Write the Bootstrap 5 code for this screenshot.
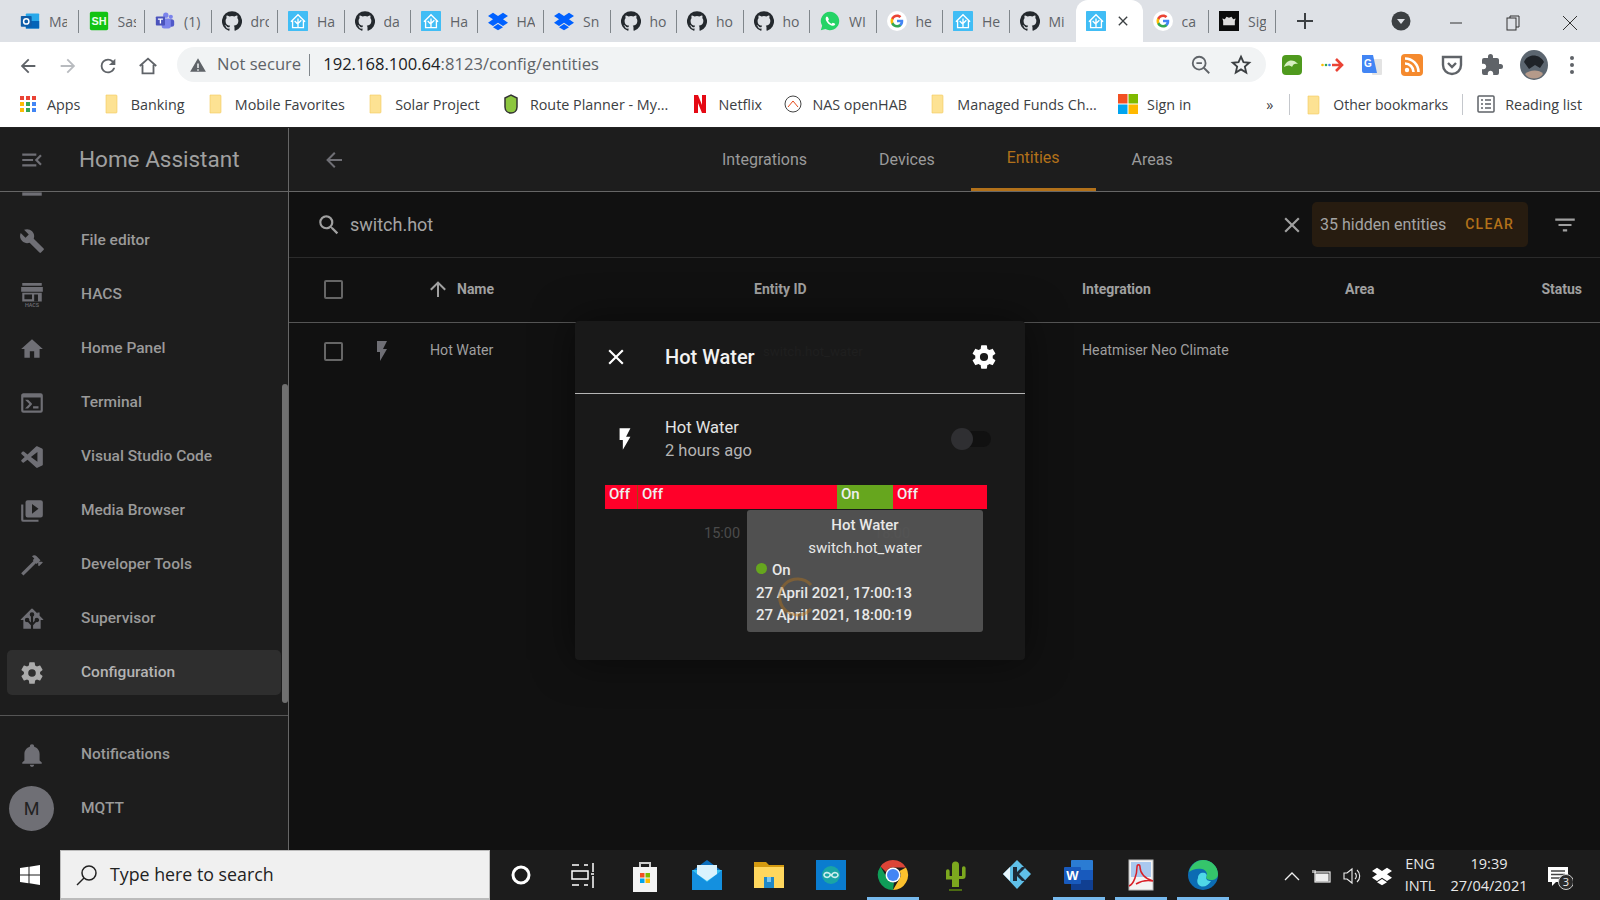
<!DOCTYPE html>
<html lang="en">
<head>
  <meta charset="UTF-8" />
  <meta name="viewport" content="width=device-width, initial-scale=1" />
  <title>Entities - Home Assistant</title>
  <link href="https://cdn.jsdelivr.net/npm/bootstrap@5.3.0/dist/css/bootstrap.min.css" rel="stylesheet" />
  <style>
    html, body { height: 900px; overflow: hidden; }
    body { font-family: "Open Sans", "Liberation Sans", sans-serif; background: #111; width: 1600px; }
    .ha { font-family: Roboto, "Liberation Sans", sans-serif; }

    /* browser chrome */
    .tabstrip { height: 42px; background: #dee1e6; padding-left: 12px; }
    .btab { width: 66.5px; height: 42px; padding-left: 10px; position: relative; color: #5f6368; font-size: 14px; }
    .btab:first-child { padding-left: 8px; }
    .btab::after { content: ""; position: absolute; right: 0; top: 10px; height: 23px; width: 1px; background: #80868b; }
    .btab svg { width: 20px; height: 20px; flex: none; }
    .btab .ttl { margin-left: 9px; width: 18px; overflow: hidden; white-space: nowrap; }
    .btab.on { background: #fff; border-radius: 12px 12px 0 0; }
    .btab.on::after, .btab.nosep::after { display: none; }
    .btab.on .tabx { width: 16px; height: 16px; margin-right: 11.5px; }
    .newtab { margin-left: 20px; }
    .chromegap { margin-left: 77px; }
    .winctl { width: 57px; }
    .wingap { margin-left: 17px; }
    .toolbar { height: 43px; background: #fff; padding-top: 2px; }
    .tb-btn { width: 40px; }
    .omni { width: 1089px; height: 35px; background: #f1f3f4; border-radius: 18px; margin-left: 9px; padding-left: 12px; font-size: 16.6px; color: #5f6368; }
    .omni .warnico { margin-right: 10px; }
    .omni .urlsep { width: 1px; height: 22px; background: #80868b; margin: 0 13px 0 8px; }
    .omni .urlhost { color: #202124; }
    .omni-end { gap: 18px; padding-right: 14px; }
    .ext-icons { gap: 16px; margin-left: 14px; }
    .bookmarks { height: 43px; background: #fff; border-bottom: 1px solid #222; font-size: 14.35px; color: #3c4043; padding: 0 0 3px 18px; white-space: nowrap; }
    .bookmarks svg { width: 20px; height: 20px; flex: none; }
    .bmk { gap: 9px; margin-right: 21.3px; }
    .bmsep { width: 1px; height: 21px; background: #c4c7cc; }
    .bmk-other { margin: 0 14px 0 14px; font-size: 14px; }
    .bmk-read { margin: 0 18px 0 13px; }

    /* sidebar */
    .app { height: 722px; position: relative; }
    .sidebar { width: 289px; background: #1d1d1d; border-right: 1px solid #666; position: relative; flex: none; }
    .side-head { height: 64px; border-bottom: 1px solid #666; flex: none; color: #a0a0a0; font-size: 22.5px; padding-left: 19px; }
    .side-head svg { margin-right: 34px; }
    .side-scroll { height: 524px; overflow: hidden; border-bottom: 1px solid #555; padding-bottom: 20px; flex: none; }
    .side-item { height: 45px; margin: 0 7px 9px; padding-left: 12px; color: #9a9a9a; font-size: 15.5px; font-weight: 500; border-radius: 5px; flex: none; width: 274px; }
    .side-item:last-child { margin-bottom: 0; }
    .side-item svg { width: 26px; height: 26px; fill: #6f6f75; margin-right: 36px; flex: none; }
    .side-item.cur { background: #2e2e2e; color: #b4b4b4; }
    .side-item.cur svg { fill: #ababab; }
    .side-foot { padding-top: 16px; }
    .avatar { width: 45px; height: 45px; border-radius: 50%; background: #6f6f75; color: #222; font-size: 18px; font-weight: 400; margin: 0 27px 0 -10px; }
    .scrollthumb { position: absolute; right: 0; top: 256px; width: 6px; height: 319px; background: #707070; border-radius: 3px; }

    /* main panel */
    .tabbar { height: 64px; background: #1d1d1d; border-bottom: 1px solid #666; color: #9a9a9a; font-size: 16px; }
    .tabbar .backbtn { width: 24px; margin-left: 33px; margin-right: 340px; }
    .hatab { height: 63px; padding: 0 36px; }
    .hatab.on { color: #b2711a; border-bottom: 3px solid #b2711a; }
    .searchrow { height: 66px; border-bottom: 1px solid #2b2b2b; color: #a4a4a4; font-size: 18px; padding-left: 27px; }
    .filterico { margin: 0 22px 0 24px; }
    .hiddenbox { width: 216px; height: 45px; background: #271c10; border-radius: 5px; padding: 0 14px 0 8px; font-size: 16px; margin-left: 7px; }
    .clearbtn { color: #b2711a; font-size: 14px; font-weight: 500; letter-spacing: 1.2px; }
    .cols { display: grid; grid-template-columns: 81px 60px 324px 328px 263px 1fr auto; }
    .headrow { height: 65px; border-bottom: 1px solid #555; color: #a0a0a0; font-size: 14px; font-weight: 700; padding-bottom: 2px; }
    .headrow .statuscol { padding-right: 18px; }
    .arrowup { margin: 0 7px 0 -4px; }
    .entrow { height: 58px; color: #9f9f9f; font-size: 14.2px; padding-bottom: 2px; }
    .cbox { width: 19px; height: 19px; border: 2px solid #666; border-radius: 2px; margin-left: 35px; }

    /* dialog */
    .moreinfo { position: absolute; left: 575px; top: 193px; width: 450px; height: 339px; background: #191919; border-radius: 4px; box-shadow: 0 0 40px rgba(0,0,0,.5); color: #e4e4e4; }
    .mi-head { height: 73px; border-bottom: 1px solid #b5b5b5; padding: 0 27px 0 28px; position: relative; }
    .mi-title { font-size: 20px; font-weight: 500; color: #f2f2f2; margin-left: 36px; }
    .mi-ghost { position: absolute; left: 188px; top: 21px; font-size: 13.2px; color: #1f1f1f; }
    .mi-state { height: 82px; padding: 0 34px 0 37px; margin-top: 4px; font-size: 16.5px; line-height: 23px; }
    .mi-name { margin-left: 27px; }
    .mi-sub { color: #b4b4b4; }
    .mi-switch { width: 40px; height: 16px; background: #111; border-radius: 8px; position: relative; }
    .mi-knob { position: absolute; left: 0; top: -3px; width: 22px; height: 22px; border-radius: 50%; background: #2f2f32; }
    .timeline { margin: 5px 38px 0 30px; height: 24px; color: #eee; font-size: 15px; }
    .seg { padding-left: 4px; height: 24px; line-height: 19px; font-weight: 500; }
    .seg-off { background: #ff0029; }
    .seg-on { background: #66a61e; }
    .seg + .seg-off { border-left: 1px solid #a04a10; }
    .seg-on + .seg-off { border-left: 0; }
    .axis { color: #4b4b4b; font-size: 14.5px; position: absolute; top: 202px; }
    .axis-a { left: 129px; }
    .axis-b { left: 299px; }
    .spinner { position: absolute; left: 200px; top: 254px; width: 44px; height: 44px; }
    .chart-tip { position: absolute; left: 172px; top: 189px; width: 236px; height: 122px; background: rgba(84,84,84,.94); border-radius: 3px; padding: 4px 9px; font-size: 15px; line-height: 22.6px; color: #e8e8e8; font-weight: 500; }
    .chart-tip .tip-id { font-weight: 400; }
    .tipdot { width: 11px; height: 11px; border-radius: 50%; background: #66a61e; margin-right: 5px; margin-top: -3px; }

    /* taskbar */
    .taskbar { height: 50px; background: #1c1c1c; color: #e8e8e8; position: relative; }
    .startbtn { width: 60px; }
    .tasksearch { width: 430px; background: #f0f0f0; border: 1px solid #bbb; border-bottom-width: 2px; color: #222; font-size: 17.8px; padding-left: 14px; }
    .tasksearch svg { margin-right: 11px; }
    .taskapp { width: 62px; height: 50px; position: relative; }
    .taskapp svg { width: 34px; height: 34px; }
    .taskapp.run::after { content: ""; position: absolute; left: 5px; right: 5px; bottom: 0; height: 3px; background: #76b9ed; }
    .tray { font-size: 14.5px; }
    .trayico { width: 30px; }
    .trayclock { line-height: 22px; text-align: center; }
    .traylang { width: 36px; margin-left: 5px; }
    .trayclockbox { width: 98px; margin-left: 2px; }
    .trayspace { width: 62px; }
    .notif { position: absolute; left: 1547px; top: 14px; }
  </style>
</head>
<body class="d-flex flex-column">

<svg width="0" height="0" class="position-absolute">
  <symbol id="i-gh" viewBox="0 0 24 24"><path fill="#24292e" d="M12 .3a12 12 0 0 0-3.8 23.4c.6.1.8-.3.8-.6v-2c-3.3.7-4-1.6-4-1.6-.6-1.4-1.4-1.8-1.4-1.8-1-.7.1-.7.1-.7 1.2 0 1.9 1.2 1.9 1.2 1 1.8 2.8 1.3 3.5 1 0-.8.4-1.3.7-1.6-2.7-.3-5.5-1.3-5.5-6 0-1.2.5-2.3 1.3-3.1-.2-.4-.6-1.6 0-3.2 0 0 1-.3 3.4 1.2a11.5 11.5 0 0 1 6 0c2.3-1.5 3.3-1.2 3.3-1.2.6 1.6.2 2.8 0 3.2.9.8 1.3 1.9 1.3 3.2 0 4.6-2.8 5.6-5.5 5.9.5.4.9 1 .9 2.2v3.3c0 .3.1.7.8.6A12 12 0 0 0 12 .3"/></symbol>
  <symbol id="i-ha" viewBox="0 0 24 24"><rect width="24" height="24" rx="1" fill="#41bdf5"/><path fill="none" stroke="#fff" stroke-width="1.6" d="M3.500 13 12 4.500 20.500 13M5.500 11.500V20h13v-8.500M12 20V9M12 16l-4-4M12 15l4-4"/></symbol>
  <symbol id="i-db" viewBox="0 0 24 24"><path fill="#0061ff" d="M6 2 0 6l6 4-6 4 6 4 6-4 6 4 6-4-6-4 6-4-6-4-6 4zm6 4-6 4 6 4 6-4zM6 19.500 12 23l6-3.500-6-4z"/></symbol>
  <symbol id="i-g" viewBox="0 0 24 24"><circle cx="12" cy="12" r="12" fill="#fff"/><g transform="translate(3.500 3.500) scale(.71)"><path fill="#4285F4" d="M22.56 12.25c0-.78-.07-1.53-.2-2.25H12v4.26h5.92c-.26 1.37-1.04 2.53-2.21 3.31v2.77h3.57c2.08-1.92 3.28-4.74 3.28-8.09z"/><path fill="#34A853" d="M12 23c2.97 0 5.46-.98 7.28-2.66l-3.57-2.77c-.98.66-2.23 1.06-3.71 1.06-2.86 0-5.29-1.93-6.16-4.53H2.18v2.84C3.99 20.53 7.7 23 12 23z"/><path fill="#FBBC05" d="M5.84 14.09c-.22-.66-.35-1.36-.35-2.09s.13-1.43.35-2.09V7.07H2.18C1.43 8.55 1 10.22 1 12s.43 3.45 1.18 4.93l3.66-2.84z"/><path fill="#EA4335" d="M12 5.38c1.62 0 3.06.56 4.21 1.64l3.15-3.15C17.45 2.09 14.97 1 12 1 7.7 1 3.99 3.47 2.18 7.07l3.66 2.84c.87-2.6 3.3-4.53 6.16-4.53z"/></g></symbol>
  <symbol id="i-ol" viewBox="0 0 24 24"><rect x="7" y="3" width="16" height="18" rx="1" fill="#28a8ea"/><rect x="7" y="12" width="16" height="9" fill="#0364b8"/><rect x="1" y="6" width="13" height="13" rx="1" fill="#0f5da8"/><circle cx="7.500" cy="12.500" r="3.200" fill="none" stroke="#fff" stroke-width="1.800"/></symbol>
  <symbol id="i-sh" viewBox="0 0 24 24"><rect x="1" y="1" width="22" height="22" rx="2" fill="#12c312"/><text x="12" y="17" font-size="13" font-weight="700" text-anchor="middle" fill="#eaffea" font-family="Liberation Sans">SH</text></symbol>
  <symbol id="i-teams" viewBox="0 0 24 24"><circle cx="19" cy="7" r="2.500" fill="#7b83eb"/><circle cx="13" cy="5" r="3.200" fill="#7b83eb"/><rect x="16" y="10" width="7" height="9" rx="3" fill="#5059c9"/><rect x="8" y="9" width="11" height="12" rx="3" fill="#7b83eb"/><rect x="1" y="6.500" width="11" height="11" rx="1" fill="#4b53bc"/><path fill="#fff" d="M3.500 9h6v1.500H7.300V15H5.700v-4.500H3.500z"/></symbol>
  <symbol id="i-wa" viewBox="0 0 24 24"><path fill="#25d366" d="M12 1a11 11 0 0 0-9.400 16.700L1 23l5.500-1.500A11 11 0 1 0 12 1z"/><path fill="#fff" d="M8.300 6.500c-.4 0-1.500.9-1.500 2.700 0 2.700 3.700 7.800 8.500 8.500 1.800.2 2.900-1.100 3-2.100 0-.4-2.500-1.700-3-1.600-.5.200-1 1.400-1.500 1.300-1.400-.3-3.700-2.400-4.100-3.600 0-.5 1-.9 1-1.500 0-.5-1-3-1.400-3.100z"/></symbol>
  <symbol id="i-crown" viewBox="0 0 24 24"><rect width="24" height="24" fill="#0b0c0c"/><path fill="#ddd" d="M5 17v-5l-1-3 3 1 2-3 3 1 3-1 2 3 3-1-1 3v5z"/></symbol>
  <symbol id="i-folder" viewBox="0 0 20 20"><path fill="#fde293" stroke="#f4c95d" stroke-width=".6" d="M3.500 1h10a1 1 0 0 1 1 1v16a1 1 0 0 1-1 1h-10z" transform="translate(.5 0)"/></symbol>
  <symbol id="m-close" viewBox="0 0 24 24"><path d="M19,6.410L17.590,5L12,10.590L6.410,5L5,6.410L10.590,12L5,17.590L6.410,19L12,13.410L17.590,19L19,17.590L13.410,12L19,6.410Z"/></symbol>
  <symbol id="m-cog" viewBox="0 0 24 24"><path d="M12,15.500A3.500,3.500 0 0,1 8.500,12A3.500,3.500 0 0,1 12,8.500A3.500,3.500 0 0,1 15.500,12A3.500,3.500 0 0,1 12,15.500M19.430,12.970C19.470,12.650 19.500,12.330 19.500,12C19.500,11.670 19.470,11.340 19.430,11L21.540,9.370C21.730,9.220 21.780,8.950 21.660,8.730L19.660,5.270C19.540,5.050 19.270,4.960 19.050,5.050L16.560,6.050C16.040,5.660 15.500,5.320 14.870,5.070L14.500,2.420C14.460,2.180 14.250,2 14,2H10C9.750,2 9.540,2.180 9.500,2.420L9.130,5.070C8.500,5.320 7.960,5.660 7.440,6.050L4.950,5.050C4.730,4.960 4.460,5.050 4.340,5.270L2.340,8.730C2.210,8.950 2.270,9.220 2.460,9.370L4.570,11C4.530,11.340 4.500,11.670 4.500,12C4.500,12.330 4.530,12.650 4.570,12.970L2.460,14.630C2.270,14.780 2.210,15.050 2.340,15.270L4.340,18.730C4.460,18.950 4.730,19.030 4.950,18.950L7.440,17.940C7.960,18.340 8.500,18.680 9.130,18.930L9.500,21.580C9.540,21.820 9.750,22 10,22H14C14.250,22 14.460,21.820 14.500,21.580L14.870,18.930C15.500,18.670 16.040,18.340 16.560,17.940L19.050,18.950C19.270,19.030 19.540,18.950 19.660,18.730L21.660,15.270C21.780,15.050 21.730,14.780 21.540,14.630L19.430,12.970Z"/></symbol>
  <symbol id="m-flash" viewBox="0 0 24 24"><path d="M7,2V13H10V22L17,10H13L17,2H7Z"/></symbol>
</svg>

<!-- tab strip -->
<div class="tabstrip d-flex align-items-center" id="tabstrip"></div>

<!-- address bar -->
<div class="toolbar d-flex align-items-center">
  <div class="tb-btn text-center ms-2"><svg width="22" height="22" viewBox="0 0 24 24" fill="#5f6368"><path d="M20,11V13H8L13.500,18.500L12.080,19.920L4.160,12L12.080,4.080L13.500,5.500L8,11H20Z"/></svg></div>
  <div class="tb-btn text-center"><svg width="22" height="22" viewBox="0 0 24 24" fill="#b8bbbf"><path d="M4,11V13H16L10.500,18.500L11.920,19.920L19.840,12L11.920,4.080L10.500,5.500L16,11H4Z"/></svg></div>
  <div class="tb-btn text-center"><svg width="22" height="22" viewBox="0 0 24 24" fill="#5f6368"><path d="M17.650,6.350C16.200,4.900 14.210,4 12,4A8,8 0 0,0 4,12A8,8 0 0,0 12,20C15.730,20 18.840,17.450 19.730,14H17.650C16.830,16.330 14.610,18 12,18A6,6 0 0,1 6,12A6,6 0 0,1 12,6C13.660,6 15.140,6.690 16.220,7.780L13,11H20V4L17.650,6.350Z"/></svg></div>
  <div class="tb-btn text-center"><svg width="22" height="22" viewBox="0 0 24 24" fill="none" stroke="#5f6368" stroke-width="2"><path d="M3 12 12 4l9 8M6 10.500V20h12v-9.500"/></svg></div>
  <div class="omni d-flex align-items-center">
    <svg width="18" height="18" viewBox="0 0 24 24" fill="#5f6368" class="warnico"><path d="M12 3 1.500 21h21zM11 10h2v6h-2zm0 7.500h2v2h-2z" fill-rule="evenodd"/></svg>
    <span>Not secure</span><span class="urlsep"></span>
    <span><span class="urlhost">192.168.100.64</span>:8123/config/entities</span>
    <span class="omni-end ms-auto d-flex align-items-center">
      <svg width="22" height="22" viewBox="0 0 24 24" fill="none" stroke="#5f6368" stroke-width="2"><circle cx="10" cy="10" r="7"/><path d="M15 15l6 6M7 10h6"/></svg>
      <svg width="22" height="22" viewBox="0 0 24 24" fill="none" stroke="#3c4043" stroke-width="2"><path d="m12 3 2.700 6 6.300.6-4.800 4.200 1.500 6.400L12 16.800l-5.700 3.400 1.500-6.400L3 9.600 9.300 9z"/></svg>
    </span>
  </div>
  <div class="ext-icons d-flex align-items-center">
    <svg width="24" height="24" viewBox="0 0 24 24"><rect x="2" y="2" width="20" height="20" rx="4" fill="#4f9a1e"/><path fill="#d7efc2" d="M4 14c2-7 9-9 14-3-3-1-5 0-6 3-2-2-5-2-8 0z"/></svg>
    <svg width="24" height="24" viewBox="0 0 24 24"><circle cx="2.500" cy="12" r="1.300" fill="#fbbc05"/><circle cx="6" cy="12" r="1.300" fill="#34a853"/><circle cx="9.500" cy="12" r="1.300" fill="#4285f4"/><path fill="none" stroke="#ea4335" stroke-width="2.600" d="M12 12h9M16 6l6 6-6 6"/></svg>
    <svg width="24" height="24" viewBox="0 0 24 24"><rect x="12" y="6" width="10" height="16" rx="1" fill="#e3e3e3"/><path fill="#4285f4" d="M2 2h11l4 18H4a2 2 0 0 1-2-2z"/><text x="8" y="14" font-size="10" font-weight="700" text-anchor="middle" fill="#fff" font-family="Liberation Sans">G</text></svg>
    <svg width="24" height="24" viewBox="0 0 24 24"><rect x="1" y="1" width="22" height="22" rx="4" fill="#f58a2e"/><circle cx="7" cy="17" r="2.200" fill="#fff"/><path fill="none" stroke="#fff" stroke-width="2.600" d="M5 10.500a8.500 8.500 0 0 1 8.500 8.500M5 5.500A13.500 13.500 0 0 1 18.500 19"/></svg>
    <svg width="24" height="24" viewBox="0 0 24 24"><path fill="none" stroke="#5f6368" stroke-width="2.400" d="M3 4h18v8a9 9 0 0 1-18 0zM8 10l4 4 4-4"/></svg>
    <svg width="24" height="24" viewBox="0 0 24 24" fill="#5f6368"><path d="M20.500,11H19V7C19,5.890 18.100,5 17,5H13V3.500A2.500,2.500 0 0,0 10.500,1A2.500,2.500 0 0,0 8,3.500V5H4A2,2 0 0,0 2,7V10.800H3.500C5,10.800 6.200,12 6.200,13.500C6.200,15 5,16.200 3.500,16.200H2V20A2,2 0 0,0 4,22H7.800V20.500C7.800,19 9,17.800 10.500,17.800C12,17.800 13.200,19 13.200,20.500V22H17A2,2 0 0,0 19,20V16H20.500A2.500,2.500 0 0,0 23,13.500A2.500,2.500 0 0,0 20.500,11Z"/></svg>
    <svg width="28" height="30" viewBox="0 0 28 30"><ellipse cx="14" cy="15" rx="14" ry="15" fill="#5c6670"/><path fill="#1f2328" d="M4 12c3-8 15-9 20 0l-4 6-5-3-6 4z"/><path fill="#b59a8a" d="M5 24c4-4 14-5 18 0-4 6-14 6-18 0z"/></svg>
    <svg width="16" height="22" viewBox="0 0 16 22" fill="#5f6368"><circle cx="8" cy="4" r="2"/><circle cx="8" cy="11" r="2"/><circle cx="8" cy="18" r="2"/></svg>
  </div>
</div>

<!-- bookmarks bar -->
<div class="bookmarks d-flex align-items-center" id="bookmarks"></div>

<!-- home assistant -->
<div class="app ha d-flex">
  <aside class="sidebar d-flex flex-column">
    <div class="side-head d-flex align-items-center">
      <svg width="26" height="26" viewBox="0 0 24 24" fill="#6f6f75"><path d="M21,15.610L19.590,17L14.580,12L19.590,7L21,8.390L17.440,12L21,15.610M3,6H16V8H3V6M3,13V11H13V13H3M3,18V16H16V18H3Z"/></svg>
      <span>Home Assistant</span>
    </div>
    <div class="side-scroll d-flex flex-column justify-content-end" id="sideList"></div>
    <div class="side-foot">
      <div class="side-item d-flex align-items-center"><svg viewBox="0 0 24 24"><path d="M21,19V20H3V19L5,17V11C5,7.900 7.030,5.170 10,4.290C10,4.190 10,4.100 10,4A2,2 0 0,1 12,2A2,2 0 0,1 14,4C14,4.100 14,4.190 14,4.290C16.970,5.170 19,7.900 19,11V17L21,19M14,21A2,2 0 0,1 12,23A2,2 0 0,1 10,21"/></svg>Notifications</div>
      <div class="side-item d-flex align-items-center"><span class="avatar d-flex align-items-center justify-content-center">M</span>MQTT</div>
    </div>
    <div class="scrollthumb"></div>
  </aside>

  <main class="flex-grow-1">
    <div class="tabbar d-flex align-items-center">
      <div class="backbtn"><svg width="24" height="24" viewBox="0 0 24 24" fill="#6f6f75" class="d-block"><path d="M20,11V13H8L13.500,18.500L12.080,19.920L4.160,12L12.080,4.080L13.500,5.500L8,11H20Z"/></svg></div>
      <div class="hatab d-flex align-items-center">Integrations</div>
      <div class="hatab d-flex align-items-center">Devices</div>
      <div class="hatab on d-flex align-items-center">Entities</div>
      <div class="hatab d-flex align-items-center">Areas</div>
    </div>
    <div class="searchrow d-flex align-items-center">
      <svg width="26" height="26" viewBox="0 0 24 24" fill="#a0a0a0"><path d="M9.500,3A6.500,6.500 0 0,1 16,9.500C16,11.110 15.410,12.590 14.440,13.730L14.710,14H15.500L20.500,19L19,20.500L14,15.500V14.710L13.730,14.440C12.590,15.410 11.110,16 9.500,16A6.500,6.500 0 0,1 3,9.500A6.500,6.500 0 0,1 9.500,3M9.500,5C7,5 5,7 5,9.500C5,12 7,14 9.500,14C12,14 14,12 14,9.500C14,7 12,5 9.500,5Z"/></svg>
      <span class="ms-2">switch.hot</span>
      <svg width="26" height="26" viewBox="0 0 24 24" fill="#a0a0a0" class="ms-auto"><use href="#m-close"/></svg>
      <div class="hiddenbox d-flex align-items-center justify-content-between"><span>35 hidden entities</span><span class="clearbtn">CLEAR</span></div>
      <svg width="26" height="26" viewBox="0 0 24 24" fill="#a0a0a0" class="filterico"><path d="M6,13H18V11H6M3,6V8H21V6M10,18H14V16H10V18Z"/></svg>
    </div>
    <div class="cols headrow align-items-center">
      <div><div class="cbox"></div></div>
      <div></div>
      <div class="d-flex align-items-center"><svg width="24" height="24" viewBox="0 0 24 24" fill="#a0a0a0" class="arrowup"><path d="M13,20H11V8L5.500,13.500L4.080,12.080L12,4.160L19.920,12.080L18.500,13.500L13,8V20Z"/></svg>Name</div>
      <div>Entity ID</div>
      <div>Integration</div>
      <div>Area</div>
      <div class="text-end statuscol">Status</div>
    </div>
    <div class="cols entrow align-items-center">
      <div><div class="cbox"></div></div>
      <div><svg width="24" height="24" viewBox="0 0 24 24" fill="#6f6f75" class="d-block"><use href="#m-flash"/></svg></div>
      <div>Hot Water</div>
      <div></div>
      <div>Heatmiser Neo Climate</div>
      <div></div>
      <div></div>
    </div>
  </main>

  <!-- more info dialog -->
  <div class="moreinfo">
    <div class="mi-head d-flex align-items-center">
      <svg width="26" height="26" viewBox="0 0 24 24" fill="#fff"><use href="#m-close"/></svg>
      <span class="mi-title">Hot Water</span>
      <span class="mi-ghost">switch.hot_water</span>
      <svg width="28" height="28" viewBox="0 0 24 24" fill="#fff" class="ms-auto"><use href="#m-cog"/></svg>
    </div>
    <div class="mi-state d-flex align-items-center">
      <svg width="26" height="26" viewBox="0 0 24 24" fill="#fff"><use href="#m-flash"/></svg>
      <div class="flex-grow-1 mi-name"><div>Hot Water</div><div class="mi-sub">2 hours ago</div></div>
      <div class="mi-switch"><div class="mi-knob"></div></div>
    </div>
    <div class="timeline d-flex" id="timeline"></div>
    <div class="axis axis-a">15:00</div>
    <div class="axis axis-b">18:00</div>
    <div class="chart-tip">
      <div class="text-center">Hot Water</div>
      <div class="text-center tip-id">switch.hot_water</div>
      <div class="d-flex align-items-center"><span class="tipdot"></span>On</div>
      <div>27 April 2021, 17:00:13</div>
      <div>27 April 2021, 18:00:19</div>
    </div>
    <svg class="spinner" viewBox="0 0 44 44" fill="none" stroke="#b2711a" stroke-opacity=".45" stroke-width="3"><path d="M36 10A18 18 0 1 0 36 34"/></svg>
  </div>
</div>

<!-- windows taskbar -->
<div class="taskbar d-flex">
  <div class="startbtn d-flex align-items-center justify-content-center"><svg width="20" height="20" viewBox="0 0 20 20" fill="#fff"><path d="M0 3l8.500-1.200v7.700H0zM9.500 1.700 20 0v9.500H9.500zM0 10.500h8.500v7.700L0 17zM9.500 10.500H20V20L9.500 18.300z"/></svg></div>
  <div class="tasksearch d-flex align-items-center">
    <svg width="24" height="24" viewBox="0 0 24 24" fill="none" stroke="#222" stroke-width="1.500"><circle cx="14" cy="10" r="7"/><path d="M9 15l-7 7"/></svg>
    Type here to search
  </div>
  <div class="taskapp d-flex align-items-center justify-content-center"><svg viewBox="0 0 34 34" fill="none" stroke="#fff" stroke-width="3"><circle cx="17" cy="17" r="8"/></svg></div>
  <div class="taskapp d-flex align-items-center justify-content-center"><svg viewBox="0 0 34 34" fill="none" stroke="#fff" stroke-width="1.500"><path d="M6 7h7M6 27h7M18 7h4M18 27h4M6 13h16v8H6zM27 5v9M27 18v12M25 16h3"/></svg></div>
  <div class="taskapp d-flex align-items-center justify-content-center"><svg viewBox="0 0 34 34"><path fill="none" stroke="#ccc" stroke-width="2" d="M12 10V5h10v5"/><path fill="#f3f3f3" d="M5 9h24v25H5z"/><path fill="#f25022" d="M12 15h4.500v4.500H12z"/><path fill="#7fba00" d="M17.500 15H22v4.500h-4.500z"/><path fill="#00a4ef" d="M12 20.500h4.500V25H12z"/><path fill="#ffb900" d="M17.500 20.500H22V25h-4.500z"/></svg></div>
  <div class="taskapp d-flex align-items-center justify-content-center"><svg viewBox="0 0 34 34"><path fill="#0a6ebd" d="M2 13 17 2l15 11z"/><path fill="#35c1f1" d="M2 12h30v20H2z"/><path fill="#1490df" d="M2 12l15 12 15-12v20H2z"/><path fill="#d9f2fd" d="M7 7h20v9l-10 7-10-7z"/></svg></div>
  <div class="taskapp d-flex align-items-center justify-content-center"><svg viewBox="0 0 34 34"><path fill="#d49a10" d="M2 4h12l3 3h15v5H2z"/><path fill="#ffd75e" d="M2 9h30v21H2z"/><path fill="#1e88c9" d="M12 19h10v11H12z"/><path fill="#7cc6ee" d="M15 19h4v5h-4z"/></svg></div>
  <div class="taskapp d-flex align-items-center justify-content-center"><svg viewBox="0 0 34 34"><rect x="2" y="2" width="30" height="30" fill="#0a7ccf"/><circle cx="17" cy="17" r="9" fill="#1aa5a5"/><path fill="none" stroke="#cdeeee" stroke-width="1.600" d="M16 17a3 2.400 0 1 1-1-1.800l4 3.600a3 2.400 0 1 0-1-1.800"/></svg></div>
  <div class="taskapp run d-flex align-items-center justify-content-center"><svg viewBox="0 0 34 34"><path fill="#db4437" d="M17 2a15 15 0 0 1 13 7.500H17a7.500 7.500 0 0 0-7 4.500L4.500 8.500A15 15 0 0 1 17 2z"/><path fill="#fbc02d" d="M30 9.500A15 15 0 0 1 17 32l6.500-11.200A7.500 7.500 0 0 0 23.500 13z"/><path fill="#0f9d58" d="M4.500 8.500 11 20a7.500 7.500 0 0 0 7 4.500L17 32A15 15 0 0 1 4.500 8.500z"/><circle cx="17" cy="17" r="7.500" fill="#fff"/><circle cx="17" cy="17" r="6" fill="#4285f4"/></svg></div>
  <div class="taskapp d-flex align-items-center justify-content-center"><svg viewBox="0 0 34 34"><path fill="#7ca81e" d="M14 7a3.500 3.500 0 0 1 7 0v22h-7zM8 13a1.800 1.800 0 0 1 3.600 0v5h3v3.500H8zM24 10a1.800 1.800 0 0 1 3.600 0v8a3 3 0 0 1-3 3H21v-3h3z"/><path fill="#4c6b12" d="M11 31h13v2H11z"/></svg></div>
  <div class="taskapp d-flex align-items-center justify-content-center"><svg viewBox="0 0 34 34"><path fill="#5fbfe8" d="M17 2 31 16 17 31 3 16z"/><path fill="#1d2a38" d="M13 9h4v5l5-5h4l-7 7 7 7h-4l-5-5v5h-4z"/><path fill="#e8f7fd" d="M3 16l7-7v14z"/></svg></div>
  <div class="taskapp run d-flex align-items-center justify-content-center"><svg viewBox="0 0 34 34"><rect x="9" y="2" width="22" height="30" rx="1" fill="#2b7cd3"/><rect x="9" y="12" width="22" height="10" fill="#185abd"/><rect x="9" y="22" width="22" height="10" fill="#103f91"/><rect x="2" y="9" width="17" height="17" rx="1" fill="#185abd"/><text x="10.500" y="22" font-size="13" font-weight="700" text-anchor="middle" fill="#fff" font-family="Liberation Sans">W</text></svg></div>
  <div class="taskapp run d-flex align-items-center justify-content-center"><svg viewBox="0 0 34 34"><rect x="5" y="2" width="24" height="30" fill="#f4f4f4" stroke="#bbb"/><rect x="7" y="4" width="20" height="15" fill="#aac8ee"/><path fill="none" stroke="#d92027" stroke-width="1.500" d="M5 28c5-2 8-12 8-19 0-3 3-3 3 0 0 6 5 12 13 14-5-1-12 0-17 3"/></svg></div>
  <div class="taskapp run d-flex align-items-center justify-content-center"><svg viewBox="0 0 34 34"><circle cx="17" cy="17" r="15" fill="#0c6cb3"/><path fill="#35c56b" d="M3 14C5 6 11 2 17 2c9 0 15 7 15 14 0 4-3 6-7 6-3 0-5-1-5-3 2-2 1-7-4-8-6-1-10 1-13 3z"/><path fill="#4fd8e8" d="M12 20c0-4 3-6 7-5 2 1 2 3 1 4 0 3 2 4 5 4-3 5-9 8-13 3-1-2-1-4 0-6z"/></svg></div>
  <div class="tray ms-auto d-flex align-items-center">
    <div class="trayico text-center"><svg width="18" height="18" viewBox="0 0 18 18" fill="none" stroke="#eee" stroke-width="1.300"><path d="M2 13l7-7 7 7"/></svg></div>
    <div class="trayico text-center"><svg width="20" height="18" viewBox="0 0 20 18" fill="none" stroke="#eee" stroke-width="1.200"><rect x="3" y="5" width="15" height="10"/><path fill="#eee" d="M4 7h12v7H4z"/><path d="M1 3v3M3 3v3"/></svg></div>
    <div class="trayico text-center"><svg width="20" height="20" viewBox="0 0 20 20" fill="none" stroke="#eee" stroke-width="1.100"><path d="M2 7h3l5-4v14l-5-4H2zM13 7a4 4 0 0 1 0 6M15 4a8 8 0 0 1 0 12"/></svg></div>
    <div class="trayico text-center"><svg width="20" height="20" viewBox="0 0 24 24" fill="#fff"><path d="M6 2 0 6l6 4-6 4 6 4 6-4 6 4 6-4-6-4 6-4-6-4-6 4zm6 4-6 4 6 4 6-4zM6 19.500 12 23l6-3.500-6-4z"/></svg></div>
    <div class="trayclock traylang">ENG<br>INTL</div>
    <div class="trayclock trayclockbox">19:39<br>27/04/2021</div>
    <div class="trayspace"></div>
  </div>
  <div class="notif"><svg width="26" height="24" viewBox="0 0 26 24"><path fill="#fff" d="M1 1h20v15H9l-4 4v-4H1z"/><path stroke="#444" stroke-width="1.300" d="M4 5h14M4 8.500h14M4 12h9"/><circle cx="19" cy="16" r="7.500" fill="#2b2b2b" stroke="#ccc"/><text x="19" y="20" font-size="11" text-anchor="middle" fill="#eee" font-family="Open Sans">3</text></svg></div>
</div>

<script>
  // browser tabs
  const tabs = [
    ["i-ol","Ma"],["i-sh","Sas"],["i-teams","(1)"],["i-gh","dro"],["i-ha","Ha"],["i-gh","da"],["i-ha","Ha"],
    ["i-db","HA"],["i-db","Sn"],["i-gh","ho"],["i-gh","ho"],["i-gh","ho"],["i-wa","WI"],["i-g","he"],
    ["i-ha","He"],["i-gh","Mi"],["i-ha","",true],["i-g","ca"],["i-crown","Sig"]
  ];
  const strip = document.getElementById("tabstrip");
  tabs.forEach((t, i) => {
    const el = document.createElement("div");
    el.className = "btab d-flex align-items-center" + (t[2] ? " on" : "") + (i === 15 ? " nosep" : "");
    el.innerHTML = `<svg><use href="#${t[0]}"/></svg>` + (t[2]
      ? `<svg viewBox="0 0 24 24" fill="#3c4043" class="tabx ms-auto"><use href="#m-close"/></svg>`
      : `<span class="ttl">${t[1]}</span>`);
    strip.appendChild(el);
  });
  strip.insertAdjacentHTML("beforeend", `
    <svg class="newtab" width="18" height="18" viewBox="0 0 18 18" fill="#3c4043"><path d="M8 1h2v7h7v2h-7v7H8v-7H1V8h7z"/></svg>
    <svg class="chromegap" width="20" height="20" viewBox="0 0 20 20"><circle cx="10" cy="10" r="9.500" fill="#3c4043"/><path fill="#dee1e6" d="M6 8h8l-4 5z"/></svg>
    <div class="winctl wingap text-center"><svg width="14" height="14" viewBox="0 0 14 14" stroke="#333"><path d="M1 7h12"/></svg></div>
    <div class="winctl text-center"><svg width="14" height="18" viewBox="0 0 14 18" fill="none" stroke="#333"><rect x="1" y="4" width="9" height="12"/><path d="M4 4V2h9v11h-3"/></svg></div>
    <div class="winctl text-center"><svg width="16" height="16" viewBox="0 0 16 16" stroke="#333"><path d="M1 1l14 14M15 1 1 15"/></svg></div>`);

  // bookmarks
  const folder = `<svg><use href="#i-folder"/></svg>`;
  const bms = [
    [`<svg viewBox="0 0 20 20"><g id="apps"></g></svg>`,"Apps"],
    [folder,"Banking"],[folder,"Mobile Favorites"],[folder,"Solar Project"],
    [`<svg viewBox="0 0 20 20"><path fill="#8cc63f" stroke="#333" stroke-width="1.500" d="M4 4l6-3 6 3v9c0 4-3 6-6 6s-6-2-6-6z"/></svg>`,"Route Planner - My..."],
    [`<svg viewBox="0 0 20 20"><path fill="#e50914" d="M4 1h4l4 10V1h4v18h-4L8 9v10H4z"/></svg>`,"Netflix"],
    [`<svg viewBox="0 0 20 20" fill="none" stroke="#444"><circle cx="10" cy="10" r="8"/><path stroke="#e64a19" d="M5 13l5-6 5 6"/></svg>`,"NAS openHAB"],
    [folder,"Managed Funds Ch..."],
    [`<svg viewBox="0 0 20 20"><path fill="#f25022" d="M0 0h9.500v9.500H0z"/><path fill="#7fba00" d="M10.500 0H20v9.500h-9.500z"/><path fill="#00a4ef" d="M0 10.500h9.500V20H0z"/><path fill="#ffb900" d="M10.500 10.500H20V20h-9.500z"/></svg>`,"Sign in"]
  ];
  const bar = document.getElementById("bookmarks");
  bms.forEach(b => bar.insertAdjacentHTML("beforeend", `<div class="bmk d-flex align-items-center">${b[0]}<span>${b[1]}</span></div>`));
  let dots = "";
  ["#ea4335","#ea4335","#ea4335","#fbbc05","#34a853","#4285f4","#fbbc05","#34a853","#4285f4"].forEach((c, i) => {
    dots += `<rect x="${2 + (i % 3) * 6}" y="${2 + Math.floor(i / 3) * 6}" width="4" height="4" fill="${c}"/>`;
  });
  document.getElementById("apps").innerHTML = dots;
  bar.insertAdjacentHTML("beforeend", `
    <span class="ms-auto me-3">»</span><span class="bmsep"></span>
    <div class="bmk d-flex align-items-center bmk-other">${folder}<span>Other bookmarks</span></div><span class="bmsep"></span>
    <div class="bmk d-flex align-items-center bmk-read"><svg viewBox="0 0 20 20" fill="none" stroke="#5f6368" stroke-width="1.500"><rect x="2" y="2" width="16" height="16" rx="1"/><path d="M5 6h2M9 6h6M5 10h2M9 10h6M5 14h2M9 14h6"/></svg><span>Reading list</span></div>`);

  // sidebar panels
  const panels = [
    ["", `<path d="M3 17h18v3H3z"/>`],
    ["File editor", `<path d="M22.700,19L13.600,9.900C14.500,7.600 14,4.900 12.100,3C10.100,1 7.100,0.600 4.700,1.700L9,6L6,9L1.600,4.700C0.400,7.100 0.900,10.100 2.900,12.100C4.800,14 7.500,14.500 9.800,13.600L18.900,22.700C19.300,23.100 19.900,23.100 20.300,22.700L22.600,20.400C23.100,20 23.100,19.300 22.700,19Z"/>`],
    ["HACS", `<path d="M3 1h18v2.500H3zM2 4.500h20V9H2zM3 10h18v8H3z"/><path fill="#1d1d1d" d="M5 11.500h7V16H5zM14 11.500h3.500V18H14z"/><text x="12" y="23.500" font-size="5" text-anchor="middle" font-family="Roboto">HACS</text>`],
    ["Home Panel", `<path d="M10,20V14H14V20H19V12H22L12,3L2,12H5V20H10Z"/>`],
    ["Terminal", `<path d="M20,19V7H4V19H20M20,3A2,2 0 0,1 22,5V19A2,2 0 0,1 20,21H4A2,2 0 0,1 2,19V5C2,3.890 2.900,3 4,3H20M13,17V15H18V17H13M9.580,13L5.570,9H8.400L11.700,12.300C12.090,12.690 12.090,13.330 11.700,13.720L8.420,17H5.590L9.580,13Z"/>`],
    ["Visual Studio Code", `<path fill-rule="evenodd" d="M17 16.470V7.390L11 11.930M2.220 9.190C1.920 8.870 1.910 8.400 2.200 8.110L3.400 7C3.600 6.820 4.090 6.740 4.450 7L7.870 9.600L15.800 2.350C16.120 2.030 16.670 1.900 17.300 2.230L21.300 4.140C21.660 4.350 22 4.680 22 5.320V18.820C22 19.240 21.700 19.690 21.370 19.870L17 22C16.670 22.130 16.050 22 15.830 21.770L7.850 14.500L4.450 17.100C4.070 17.360 3.600 17.280 3.400 17.100L2.200 16C1.880 15.670 1.920 15.200 2.250 14.870L5.250 12"/>`],
    ["Media Browser", `<path d="M4,6H2V20A2,2 0 0,0 4,22H18V20H4V6M20,2H8A2,2 0 0,0 6,4V16A2,2 0 0,0 8,18H20A2,2 0 0,0 22,16V4A2,2 0 0,0 20,2M12,14.500V5.500L18,10L12,14.500Z"/>`],
    ["Developer Tools", `<path d="M2 19.630L13.430 8.200L12.720 7.500L14.140 6.070L12 3.890C13.200 2.700 15.090 2.700 16.270 3.890L19.870 7.500L18.450 8.910H21.290L22 9.620L18.450 13.210L17.740 12.500V9.620L16.270 11.040L15.560 10.330L4.130 21.760L2 19.630Z"/>`],
    ["Supervisor", `<path d="M21.800,13H20V21H13V17.670L15.790,14.880L16.500,15C17.660,15 18.600,14.060 18.600,12.900C18.600,11.740 17.660,10.800 16.500,10.800A2.100,2.100 0 0,0 14.400,12.900L14.500,13.610L13,15.130V9.650C13.660,9.290 14.100,8.600 14.100,7.800A2.100,2.100 0 0,0 12,5.700A2.100,2.100 0 0,0 9.900,7.800C9.900,8.600 10.340,9.290 11,9.650V15.130L9.500,13.610L9.600,12.900A2.100,2.100 0 0,0 7.500,10.800A2.100,2.100 0 0,0 5.400,12.900A2.100,2.100 0 0,0 7.500,15L8.210,14.880L11,17.670V21H4V13H2.250C1.830,13 1.420,13 1.420,12.790C1.430,12.570 1.850,12.150 2.280,11.720L11,3C11.330,2.670 11.670,2.330 12,2.330C12.330,2.330 12.670,2.670 13,3L17,7V6H19V9L21.780,11.780C22.180,12.180 22.590,12.590 22.600,12.800C22.600,13 22.200,13 21.800,13Z"/>`],
    ["Configuration", `<use href="#m-cog"/>`, true]
  ];
  const side = document.getElementById("sideList");
  panels.forEach(p => {
    side.insertAdjacentHTML("beforeend", `<div class="side-item d-flex align-items-center${p[2] ? " cur" : ""}"><svg viewBox="0 0 24 24">${p[1]}</svg>${p[0]}</div>`);
  });

  // history bar, widths from the segment lengths in px
  const segs = [["Off",32,"off"],["Off",200,"off"],["On",56,"on"],["Off",94,"off"]];
  const line = document.getElementById("timeline");
  segs.forEach(s => {
    line.insertAdjacentHTML("beforeend", `<div class="seg seg-${s[2]}" style="width:${s[1]}px">${s[0]}</div>`);
  });
</script>
<script src="https://cdn.jsdelivr.net/npm/bootstrap@5.3.0/dist/js/bootstrap.bundle.min.js"></script>
</body>
</html>
